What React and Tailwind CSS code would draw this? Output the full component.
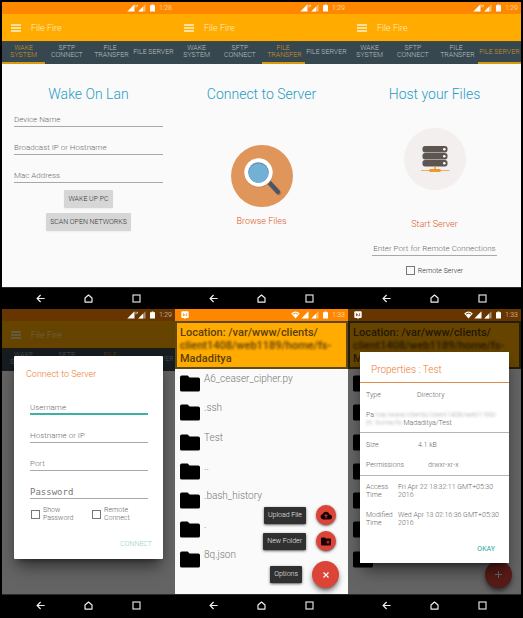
import React from "react";

const TABS = ["Wake System", "SFTP Connect", "File Transfer", "File Server"];
const FILES = ["A6_ceaser_cipher.py", ".ssh", "Test", "..", ".bash_history", ".", "8q.json"];

function Signal({ partial }) {
  return (
    <svg width="8" height="8" viewBox="0 0 8 8" aria-hidden="true">
      <path d="M0.3 7.5L7.5 0.3V7.5Z" fill="#fff" fillOpacity={partial ? 0.45 : 1} />
      {partial && <path d="M0.3 7.5L5 2.8V7.5Z" fill="#fff" />}
    </svg>
  );
}

function StatusBar({ time, browser, dim }) {
  return (
    <div className={`relative flex h-3 items-center justify-end pr-[3px] pl-1.5 ${dim ? "bg-[#663500]" : "bg-[#ff8700]"}`}>
      {browser && (
        <svg className="mr-auto" width="8" height="8" viewBox="0 0 8 8" aria-hidden="true">
          <path d="M1.2 0.3H6.8Q7.7 0.3 7.7 1.2V6Q7.7 6.9 6.8 6.9H5L4 7.9L3 6.9H1.2Q0.3 6.9 0.3 6V1.2Q0.3 0.3 1.2 0.3Z" fill="#fff" />
          <path d="M2.5 5.2V2.2M2.5 3.6Q4.2 2.6 4.2 5.2M5.6 2.2V5.2" stroke={dim ? "#663500" : "#ff8700"} strokeWidth="0.7" fill="none" />
        </svg>
      )}
      {browser && (
        <svg className="mr-px" width="9" height="8" viewBox="0 0 9 8" aria-hidden="true">
          <path d="M0.2 2.4Q4.5 -1.4 8.8 2.4L4.5 7.6Z" fill="#fff" />
          <path d="M2 3.1Q4.5 1.2 7 3.1" stroke={dim ? "#663500" : "#ff8700"} strokeWidth="0.9" fill="none" />
        </svg>
      )}
      <Signal />
      {browser ? (
        <span className="w-0.5" />
      ) : (
        <svg width="3" height="8" viewBox="0 0 3 8" aria-hidden="true">
          <path d="M1 0.8V3.4M2.4 0.8V2.6" stroke="#fff" strokeWidth="0.7" />
        </svg>
      )}
      <Signal partial />
      <svg className="mx-1" width="5" height="8" viewBox="0 0 5 8" aria-hidden="true">
        <path d="M1.5 0.4H3.5V1.3H5V7.6H0V1.3H1.5Z" fill="#fff" />
      </svg>
      <span className={`text-[7px] leading-3 font-light ${dim ? "text-[#e0cfc0]" : "text-[#ffe9cf]"}`}>{time}</span>
    </div>
  );
}

function NavBar() {
  return (
    <nav className="flex h-[22px] items-center justify-center gap-[39px] border-t border-[#2a2a2a] bg-black">
      <button aria-label="Back">
        <svg width="9" height="9" viewBox="0 0 9 9" fill="none" stroke="#eee" strokeWidth="1.2">
          <path d="M8.6 4.5H1.2M4.6 1L1.1 4.5L4.6 8" />
        </svg>
      </button>
      <button aria-label="Home">
        <svg width="9" height="9" viewBox="0 0 9 9" fill="none" stroke="#eee" strokeWidth="1.2" strokeLinejoin="round">
          <path d="M1 8.1V4L4.5 1L8 4V8.1Z" />
        </svg>
      </button>
      <button aria-label="Recent apps">
        <svg width="9" height="9" viewBox="0 0 9 9" fill="none" stroke="#ddd" strokeWidth="1.2">
          <rect x="1" y="1" width="7" height="7" />
        </svg>
      </button>
    </nav>
  );
}

function AppHeader({ active }) {
  return (
    <>
      <header className="flex h-[27px] items-center gap-[10px] bg-[#ffab00] pl-[9px]">
        <button aria-label="Menu">
          <svg width="10" height="8" viewBox="0 0 10 8" fill="none" stroke="#fff3d0" strokeWidth="1.4">
            <path d="M0 1H10M0 4H10M0 7H10" />
          </svg>
        </button>
        <h1 className="text-[9px] leading-3 font-light text-[#fff0c8]">File Fire</h1>
      </header>
      <div role="tablist" className="grid h-[23px] grid-cols-4 border-t border-[#4d4a35] bg-[#37474f]">
        {TABS.map((tab, i) => (
          <button
            key={tab}
            role="tab"
            aria-selected={i === active}
            className={`flex items-center justify-center border-b-2 text-center text-[7px] leading-[7px] font-light uppercase ${
              i === active ? "border-b-[#d89a10] text-[#c8962a]" : "border-b-transparent text-[#b9c0c3]"
            }`}
          >
            <span className={i === 3 ? "whitespace-nowrap" : "w-8"}>{tab}</span>
          </button>
        ))}
      </div>
    </>
  );
}

function Field({ label, type = "text", focused, mono, center }) {
  return (
    <input
      type={type}
      aria-label={label}
      placeholder={label}
      className={`block h-[14px] w-full bg-transparent leading-3 outline-none ${
        focused ? "border-b-2 border-[#3fb0a6]" : "border-b border-[#a8a8a8]"
      } ${mono ? "font-['DejaVu_Sans_Mono',monospace] text-[9px] placeholder:text-[#777]" : "text-[8px] font-light placeholder:text-[#6c6c6c]"} ${
        center ? "text-center" : ""
      }`}
    />
  );
}

function Check({ children, className = "" }) {
  return (
    <label className={`flex items-center gap-[3px] text-[7px] leading-2 font-light ${className}`}>
      <input type="checkbox" className="size-[9px] shrink-0 appearance-none border border-[#777] bg-transparent" />
      {children}
    </label>
  );
}

function Screen({ children }) {
  return <section className="flex min-w-0 flex-col bg-[#fafafa]">{children}</section>;
}

function Title({ children }) {
  return <h2 className="text-center text-[14px] leading-5 font-light text-[#1f9cc4]">{children}</h2>;
}

function Folder() {
  return (
    <svg className="shrink-0" width="20" height="17" viewBox="0 0 20 17" aria-hidden="true">
      <path d="M1.8 0.5H7.6L9.6 2.4H18.2Q20 2.4 20 4.2V14.9Q20 16.6 18.2 16.6H1.8Q0 16.6 0 14.9V2.2Q0 0.5 1.8 0.5Z" fill="#000" />
    </svg>
  );
}

function FileBrowser({ covered }) {
  return (
    <>
      <header className="h-12 border-2 border-[#5c4a1c] bg-[#ffab00] pt-[3px] pl-[3px] text-[11px] leading-[13px] font-medium text-[#5a3f0a]">
        <p>Location: /var/www/clients/</p>
        <p className="overflow-hidden whitespace-nowrap blur-[1px]">client1408/web1189/home/fs-</p>
        <p>Madaditya</p>
      </header>
      <ul className="flex flex-1 flex-col pt-[6px] pb-[14px] pl-[5px]">
        {FILES.map((name) => (
          <li key={name} className="flex flex-1 items-start gap-1 text-[10px] leading-2 font-light text-[#777]">
            <Folder />
            {!covered && name}
          </li>
        ))}
      </ul>
    </>
  );
}

function ActionLabel({ children }) {
  return (
    <span className="rounded-[1px] bg-[#303030] px-1 text-[7px] leading-[17px] font-light text-[#eee] shadow-sm shadow-black/50">{children}</span>
  );
}

function Action({ label, children }) {
  return (
    <div className="flex items-center gap-[10px]">
      <ActionLabel>{label}</ActionLabel>
      <button aria-label={label} className="mr-[3px] flex size-5 items-center justify-center rounded-full bg-[#db4437] shadow-sm shadow-black/50">
        {children}
      </button>
    </div>
  );
}

function Prop({ name, children, className }) {
  return (
    <div className={`grid ${className}`}>
      <dt>{name}</dt>
      <dd>{children}</dd>
    </div>
  );
}

export default function App() {
  return (
    <main className="grid min-h-screen grid-cols-3 grid-rows-2 bg-black p-0.5 font-['Roboto','Liberation_Sans',sans-serif]">
      <Screen>
        <StatusBar time="1:28" />
        <AppHeader active={0} />
        <form className="flex flex-1 flex-col items-center px-3 pt-5">
          <Title>Wake On Lan</Title>
          <div className="mt-[9px] flex w-full flex-col gap-[14px]">
            <Field label="Device Name" />
            <Field label="Broadcast IP or Hostname" />
            <Field label="Mac Address" />
          </div>
          <button type="button" className="mt-[7px] h-[18px] rounded-[1px] bg-[#d6d6d6] px-1 text-[7px] font-light text-[#333] shadow-xs">
            WAKE UP PC
          </button>
          <button type="button" className="mt-[5px] h-[18px] rounded-[1px] bg-[#d6d6d6] px-1 text-[7px] font-light text-[#333] shadow-xs">
            SCAN OPEN NETWORKS
          </button>
        </form>
        <NavBar />
      </Screen>

      <Screen>
        <StatusBar time="1:29" />
        <AppHeader active={2} />
        <div className="flex flex-1 flex-col items-center pt-5">
          <Title>Connect to Server</Title>
          <button className="mt-[41px] flex flex-col items-center gap-2">
            <svg width="62" height="62" viewBox="0 0 62 62" aria-hidden="true">
              <circle cx="31" cy="31" r="31" fill="#e0965a" />
              <path d="M38 38L48 48" stroke="#c27f4a" strokeWidth="5" strokeLinecap="round" />
              <path d="M37 36L47 47" stroke="#4a5568" strokeWidth="4.4" strokeLinecap="round" />
              <circle cx="27.5" cy="28.5" r="14.3" fill="#c98450" />
              <circle cx="27.5" cy="27.5" r="14.2" fill="#fff" />
              <circle cx="27.5" cy="27.5" r="10.3" fill="#5b93b3" />
              <circle cx="27.5" cy="28.2" r="9.7" fill="#72b0d6" />
            </svg>
            <span className="text-[9px] leading-3 font-light text-[#e0591f]">Browse Files</span>
          </button>
        </div>
        <NavBar />
      </Screen>

      <Screen>
        <StatusBar time="1:29" />
        <AppHeader active={3} />
        <div className="flex flex-1 flex-col items-center px-6 pt-5">
          <Title>Host your Files</Title>
          <button className="mt-6 flex flex-col items-center gap-7">
            <svg width="62" height="62" viewBox="0 0 62 62" aria-hidden="true">
              <circle cx="31" cy="31" r="31" fill="#f3efee" />
              {[18, 25, 32].map((y) => (
                <g key={y}>
                  <rect x="18.5" y={y} width="25" height="6.4" rx="2.6" fill="#5d5550" />
                  <circle cx="40.3" cy={y + 3.2} r="1.3" fill="#fff" />
                </g>
              ))}
              <path d="M17 42.5H45.5" stroke="#f0a54a" strokeWidth="0.9" />
              <path d="M31 38.5V42" stroke="#f0a030" strokeWidth="1.6" />
              <rect x="25.5" y="41" width="11" height="3" fill="#f0962a" />
            </svg>
            <span className="text-[9px] leading-3 font-light text-[#e0591f]">Start Server</span>
          </button>
          <div className="mt-3 w-full">
            <Field label="Enter Port for Remote Connections" center />
          </div>
          <Check className="mt-[10px] text-[#333]">Remote Server</Check>
        </div>
        <NavBar />
      </Screen>

      <Screen>
        <StatusBar time="1:29" dim />
        <div className="relative flex flex-1 flex-col">
          <AppHeader active={2} />
          <div className="absolute inset-0 flex flex-col bg-black/60 px-3 pt-[35px] pb-[35px]">
            <form role="dialog" aria-label="Connect to Server" className="flex flex-1 flex-col rounded-[1px] bg-white pt-3 pr-[15px] pl-4 shadow-lg shadow-black/50">
              <h2 className="-ml-1 text-[9px] leading-3 font-light text-[#ee7a2b]">Connect to Server</h2>
              <div className="mt-[21px] flex flex-col gap-[14px]">
                <Field label="Username" focused />
                <Field label="Hostname or IP" />
                <Field label="Port" />
                <Field label="Password" type="password" mono />
              </div>
              <div className="mt-[7px] grid grid-cols-2 text-[#666]">
                <Check className="pl-px"><span className="w-8">Show Password</span></Check>
                <Check className="pl-[3px]"><span className="w-8">Remote Connect</span></Check>
              </div>
              <button type="button" className="mt-4 -mr-1 self-end text-[7px] leading-3 font-light text-[#8fd0c8]">CONNECT</button>
            </form>
          </div>
        </div>
        <NavBar />
      </Screen>

      <Screen>
        <StatusBar time="1:33" browser />
        <div className="relative flex flex-1 flex-col">
          <FileBrowser />
          <div className="absolute right-[9px] bottom-[6px] flex flex-col items-end gap-[6px]">
            <Action label="Upload File">
              <svg width="12" height="9" viewBox="0 0 12 9" aria-hidden="true">
                <path d="M3 8.5A2.8 2.8 0 0 1 2.7 3A3.6 3.6 0 0 1 9.5 3.5A2.5 2.5 0 0 1 9.5 8.5Z" fill="#1a0000" />
                <path d="M6 7V4M4.5 5L6 3.5L7.5 5" stroke="#db4437" strokeWidth="1" fill="none" />
              </svg>
            </Action>
            <Action label="New Folder">
              <svg width="10" height="9" viewBox="0 0 10 9" aria-hidden="true">
                <path d="M1 0.5H4L5 1.5H9Q10 1.5 10 2.5V7.5Q10 8.5 9 8.5H1Q0 8.5 0 7.5V1.5Q0 0.5 1 0.5Z" fill="#1a0000" />
                <path d="M7 3.5V6.7M5.4 5.1H8.6" stroke="#db4437" strokeWidth="0.9" />
              </svg>
            </Action>
            <div className="mt-1 flex items-center gap-[10px]">
              <ActionLabel>Options</ActionLabel>
              <button aria-label="Close options" className="flex size-[27px] items-center justify-center rounded-full bg-[#db4437] shadow-md shadow-black/50">
                <svg width="6" height="6" viewBox="0 0 6 6" stroke="#fff" strokeWidth="1.1">
                  <path d="M0.5 0.5L5.5 5.5M5.5 0.5L0.5 5.5" />
                </svg>
              </button>
            </div>
          </div>
        </div>
        <NavBar />
      </Screen>

      <Screen>
        <StatusBar time="1:33" browser dim />
        <div className="relative flex flex-1 flex-col">
          <FileBrowser covered />
          <button aria-label="Add" className="absolute right-[9px] bottom-[6px] flex size-[27px] items-center justify-center rounded-full bg-[#db4437] shadow-md shadow-black/50">
            <svg width="7" height="7" viewBox="0 0 7 7" stroke="#fff" strokeWidth="1">
              <path d="M3.5 0V7M0 3.5H7" />
            </svg>
          </button>
          <div className="absolute inset-0 flex flex-col bg-black/60 px-3 pt-[31px] pb-[31px]">
            <div role="dialog" aria-label="Properties" className="flex flex-1 flex-col bg-white text-[7px] leading-2 font-light text-[#666] shadow-lg shadow-black/50">
              <h2 className="border-b border-[#e08a4a] pt-3 pb-[6px] pl-[11px] text-[10px] leading-3 font-light text-[#ee7a2b]">Properties : Test</h2>
              <dl className="flex flex-col">
                <Prop name="Type" className="grid-cols-[51px_1fr] px-[6px] pt-2">Directory</Prop>
                <div className="border-b border-[#b5b5b5] px-[6px] pt-3 pb-[5px]">
                  <dt className="inline">Pa</dt>
                  <dd className="inline">
                    <span className="text-[#aaa] blur-[1px]">/var/www/clients/client1408/web1189/</span>
                    <br />
                    <span className="text-[#aaa] blur-[1px]">th: home/fs-</span>
                    Madaditya/Test
                  </dd>
                </div>
                <Prop name="Size" className="grid-cols-[52px_1fr] px-[6px] pt-2">4.1 kB</Prop>
                <Prop name="Permissions" className="grid-cols-[62px_1fr] border-b border-[#b5b5b5] px-[6px] pt-3 pb-[6px]">drwxr-xr-x</Prop>
                <Prop name="Access Time" className="grid-cols-[32px_1fr] px-[6px] pt-[7px]">Fri Apr 22 18:32:11 GMT+05:30 2016</Prop>
                <Prop name="Modified Time" className="grid-cols-[32px_1fr] px-[6px] pt-3">Wed Apr 13 02:16:36 GMT+05:30 2016</Prop>
              </dl>
              <button className="mt-4 mr-[14px] self-end text-[7px] leading-3 font-normal text-[#26a69a]">OKAY</button>
            </div>
          </div>
        </div>
        <NavBar />
      </Screen>
    </main>
  );
}
